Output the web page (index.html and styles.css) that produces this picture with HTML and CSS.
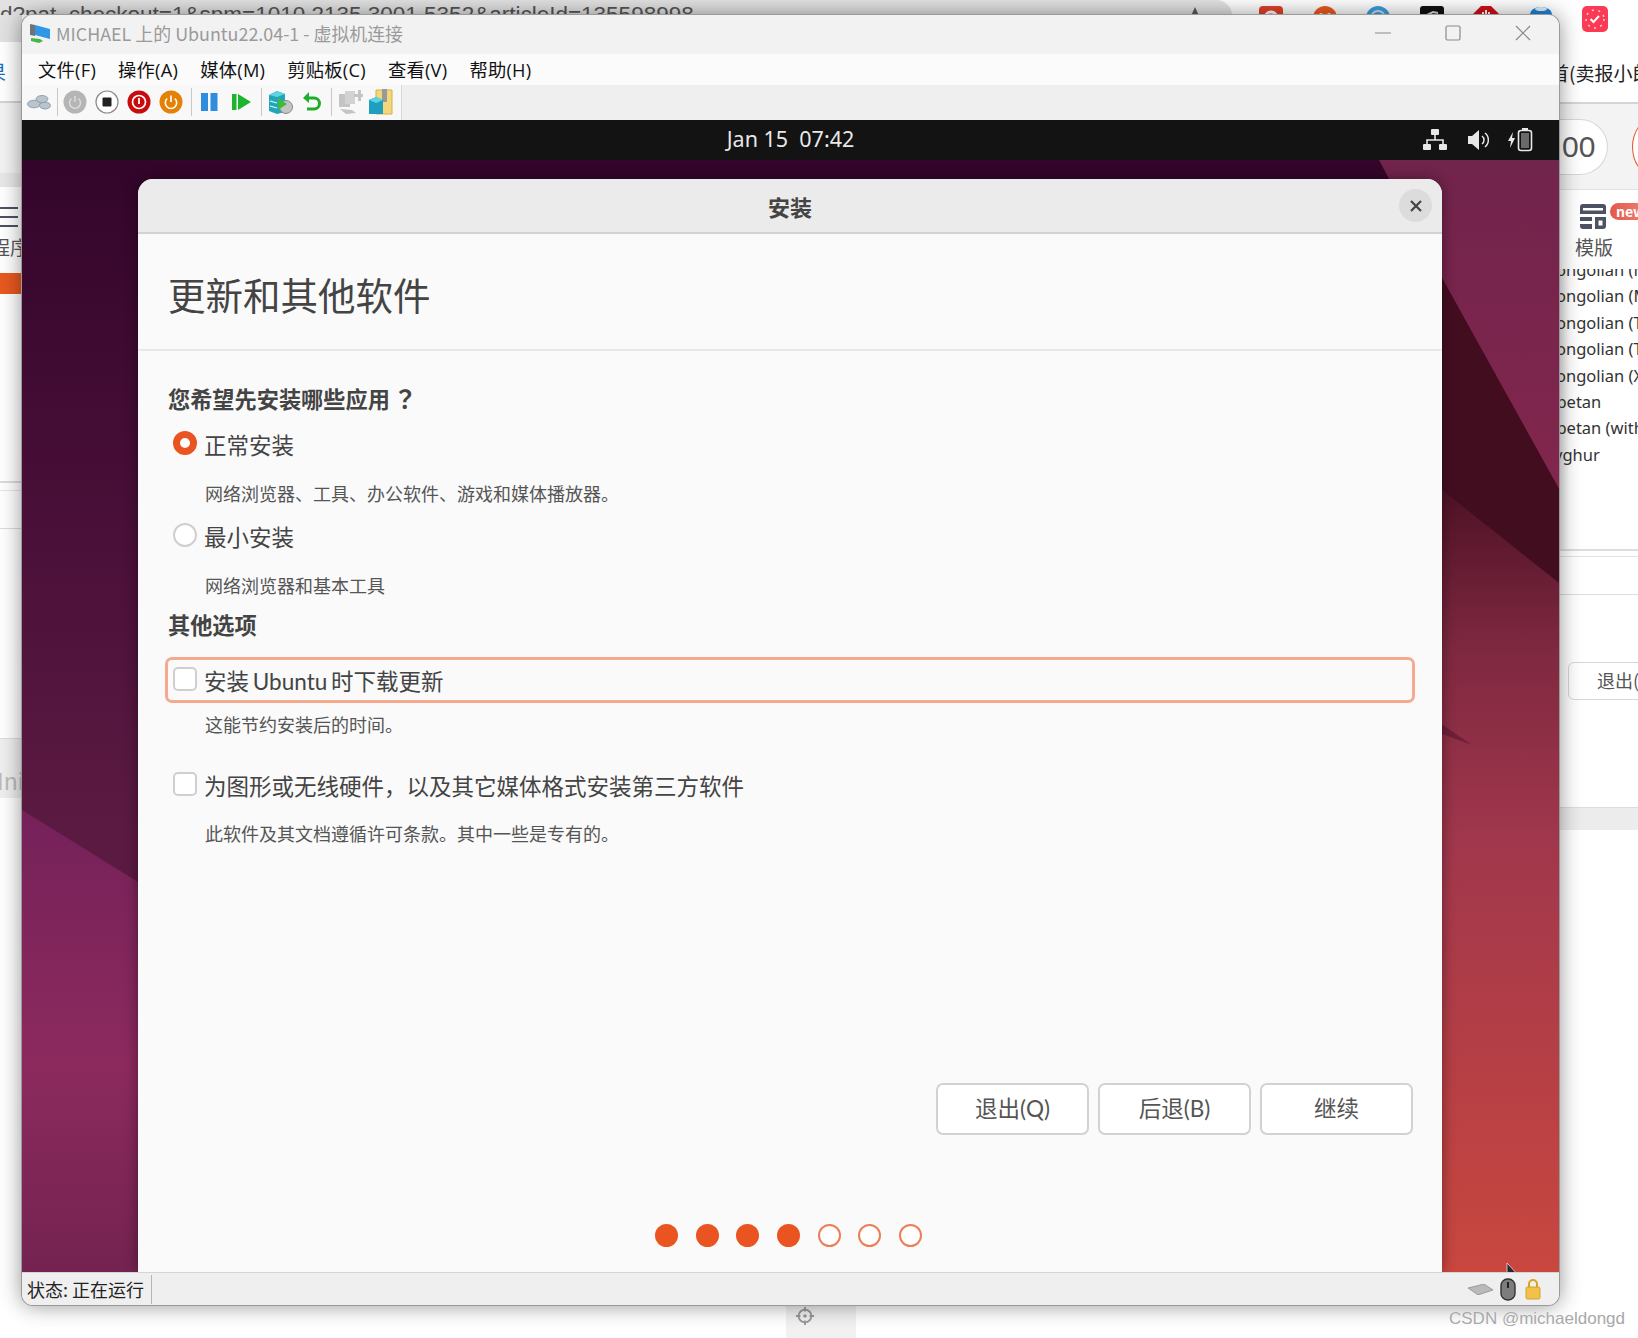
FILE: index.html
```html
<!DOCTYPE html>
<html lang="zh-CN">
<head>
    <meta charset="UTF-8">
    <title>MICHAEL 上的 Ubuntu22.04-1 - 虚拟机连接</title>
    <link rel="stylesheet" href="styles.css">
</head>
<body>
<div class="desktop">
    <!-- browser page behind the vm window -->
    <div class="browser-top">
        <div class="address-bar">
            <span class="address-text">d?pat_checkout=1&amp;spm=1010.2135.3001.5352&amp;articleId=135598998</span>
            <svg class="star" width="26" height="26" viewBox="0 0 26 26"><path d="M13 1l3.6 8 8.4.9-6.300 5.700 1.800 8.400L13 19.800 5.500 24l1.800-8.400L1 9.900 9.400 9z" fill="#5a5a5a"/></svg>
        </div>
        <div class="ext-icons">
            <svg width="24" height="24" viewBox="0 0 24 24"><rect width="24" height="24" rx="4" fill="#e2402c"/><circle cx="12" cy="12" r="6" fill="none" stroke="#fff" stroke-width="3"/></svg>
            <svg width="24" height="24" viewBox="0 0 24 24"><circle cx="12" cy="12" r="12" fill="#ee5a1f"/><circle cx="8" cy="9" r="2" fill="#fff"/><circle cx="16" cy="9" r="2" fill="#fff"/></svg>
            <svg width="24" height="24" viewBox="0 0 24 24"><circle cx="12" cy="12" r="12" fill="#3f9fdc"/><circle cx="12" cy="12" r="7" fill="none" stroke="#bfe2f7" stroke-width="2"/></svg>
            <svg width="24" height="24" viewBox="0 0 24 24"><rect width="24" height="24" rx="3" fill="#111"/><path d="M5 10l8-4 5 1" stroke="#ddd" stroke-width="2" fill="none"/></svg>
            <svg width="26" height="26" viewBox="0 0 26 26"><path d="M8 0h10l8 8v10l-8 8H8l-8-8V8z" fill="#d3101a"/><path d="M10 12V6M13 12V4M16 12V6" stroke="#fff" stroke-width="2"/></svg>
            <svg width="24" height="24" viewBox="0 0 24 24"><ellipse cx="12" cy="8" rx="11" ry="7" fill="#1b86dc"/><ellipse cx="12" cy="3" rx="6" ry="2" fill="#dff1fc"/></svg>
            <svg class="clock" width="26" height="26" viewBox="0 0 26 26"><rect width="26" height="26" rx="5" fill="#fb3a55"/><circle cx="13" cy="13" r="9" fill="none" stroke="#ffd0d6" stroke-width="1.500" stroke-dasharray="2 4.500"/><path d="M8.500 13l3 3 5.500-6" stroke="#fff" stroke-width="2" fill="none"/></svg>
        </div>
    </div>

    <div class="browser-main">
        <div class="page-left">
            <div class="left-head"><span class="left-link">果</span></div>
            <div class="left-tools">
                <div class="hamburger"></div>
                <div class="left-label">程序</div>
                <div class="left-active"></div>
            </div>
            <div class="left-rule"></div>
            <div class="left-rule left-rule-b"></div>
            <div class="left-band"><span>Ini</span></div>
        </div>

        <div class="page-gap"></div>

        <div class="page-right">
            <div class="right-head"><span>首(卖报小郎君)</span></div>
            <div class="right-band">
                <div class="pill">00</div>
                <div class="red-ring"></div>
            </div>
            <div class="template-cell">
                <svg width="26" height="25" viewBox="0 0 26 25"><path d="M3 0h20a3 3 0 0 1 3 3v7H0V3a3 3 0 0 1 3-3z" fill="#4d5263"/><rect x="3" y="4" width="20" height="2.500" fill="#fff"/><path d="M0 13h12v4H0zM0 20h12v5H3a3 3 0 0 1-3-3zM15 13h11v9a3 3 0 0 1-3 3h-8z" fill="#4d5263"/><rect x="18.500" y="16.500" width="4" height="5" fill="#fff"/></svg>
                <span class="new-badge">new</span>
                <div class="template-label">模版</div>
            </div>
            <ul class="lang-list">
                <li class="lang-m">Mongolian (Manchu)</li>
                <li class="lang-m">Mongolian (Manchu Galik)</li>
                <li class="lang-m">Mongolian (Todo)</li>
                <li class="lang-m">Mongolian (Todo Galik)</li>
                <li class="lang-m">Mongolian (Xibe)</li>
                <li class="lang-t">Tibetan</li>
                <li class="lang-t">Tibetan (with ASCII)</li>
                <li class="lang-u">Uyghur</li>
            </ul>
            <div class="right-rule"></div>
            <div class="right-field"></div>
            <div class="right-btn">退出(Q)</div>
            <div class="right-band-low"></div>
        </div>
    </div>

    <div class="browser-bottom">
        <div class="bottom-band">
            <svg width="20" height="20" viewBox="0 0 22 22"><circle cx="11" cy="11" r="7" fill="none" stroke="#999" stroke-width="2"/><circle cx="11" cy="11" r="2" fill="#999"/><path d="M11 1v5M11 16v5M1 11h5M16 11h5" stroke="#999" stroke-width="2"/></svg>
        </div>
    </div>

    <!-- hyper-v window -->
    <div class="vm-window">
        <div class="title-bar">
            <svg width="22" height="22" viewBox="0 0 22 22">
                <path d="M6 3l15 4v10L6 13z" fill="#2f97e6"/>
                <path d="M1 2l5 1v11l-5-1z" fill="#6d7478"/>
                <path d="M2 16l9 1 3 2-4 2-8-2z" fill="#49b34a"/>
            </svg>
            <span class="title-text">MICHAEL 上的 Ubuntu22.04-1 - 虚拟机连接</span>
            <div class="win-controls">
                <svg width="16" height="16" viewBox="0 0 16 16"><path d="M0 8h16" stroke="#8a8a8a" stroke-width="1.200"/></svg>
                <svg width="16" height="16" viewBox="0 0 16 16"><rect x="1" y="1" width="14" height="14" rx="1.500" fill="none" stroke="#8a8a8a" stroke-width="1.200"/></svg>
                <svg width="16" height="16" viewBox="0 0 16 16"><path d="M1 1l14 14M15 1L1 15" stroke="#8a8a8a" stroke-width="1.200"/></svg>
            </div>
        </div>

        <div class="menu-bar">
            <span class="menu-item">文件(F)</span>
            <span class="menu-item">操作(A)</span>
            <span class="menu-item">媒体(M)</span>
            <span class="menu-item">剪贴板(C)</span>
            <span class="menu-item">查看(V)</span>
            <span class="menu-item">帮助(H)</span>
        </div>

        <div class="tool-bar">
            <div class="tool-strip">
                <svg class="t-net" width="24" height="16" viewBox="0 0 24 16"><g fill="#b9c4cf" stroke="#8494a3" stroke-width=".8"><ellipse cx="7" cy="10" rx="6.500" ry="3.800"/><ellipse cx="18" cy="11.500" rx="5.500" ry="3.500"/><ellipse cx="15" cy="5" rx="6" ry="3.500"/></g></svg>
                <i class="tool-sep"></i>
                <svg class="t-btn" width="24" height="24" viewBox="0 0 24 24"><circle cx="12" cy="12" r="11.500" fill="#b5b5b5"/><path d="M8.500 8.500a5.500 5.500 0 1 0 7 0M12 6v6" fill="none" stroke="#dcdcdc" stroke-width="1.500"/></svg>
                <svg class="t-btn" width="24" height="24" viewBox="0 0 24 24"><circle cx="12" cy="12" r="11" fill="#fff" stroke="#8a8a8a" stroke-width="1.200"/><rect x="7.500" y="7.500" width="9" height="9" rx="1" fill="#222"/></svg>
                <svg class="t-btn" width="24" height="24" viewBox="0 0 24 24"><circle cx="12" cy="12" r="11.500" fill="#c90b0b"/><circle cx="12" cy="12" r="6.500" fill="none" stroke="#fff" stroke-width="1.700"/><path d="M12 8v6" stroke="#fff" stroke-width="1.800"/></svg>
                <svg class="t-btn" width="24" height="24" viewBox="0 0 24 24"><circle cx="12" cy="12" r="11.500" fill="#e38207"/><path d="M8.200 8.500a5.700 5.700 0 1 0 7.600 0M12 5.500V12" fill="none" stroke="#fff" stroke-width="1.600"/></svg>
                <i class="tool-sep"></i>
                <svg class="t-btn" width="24" height="24" viewBox="0 0 24 24"><rect x="4" y="3" width="7" height="18" fill="#2f8de0"/><rect x="13.500" y="3" width="7" height="18" fill="#2f8de0"/></svg>
                <svg class="t-btn" width="24" height="24" viewBox="0 0 24 24"><rect x="3" y="4" width="4.500" height="16" fill="#1cb52d"/><path d="M9 4l13 8-13 8z" fill="#1cb52d"/></svg>
                <i class="tool-sep"></i>
                <svg class="t-btn" width="26" height="26" viewBox="0 0 26 26"><path d="M2 6l8-4 8 3v18l-8 2-8-3z" fill="#23a5b8"/><path d="M2 6l8-4 8 3-8 3z" fill="#5fd3e2"/><path d="M3 12l7 2M3 17l7 2" stroke="#dff" stroke-width="1.200"/><circle cx="19" cy="18" r="6.500" fill="#c4c4c4" stroke="#888"/><path d="M11 9l9 6-9 6z" fill="#3dbb3d"/></svg>
                <svg class="t-btn" width="22" height="24" viewBox="0 0 22 24"><path d="M5 8h8a5.500 5.500 0 0 1 0 11H6" fill="none" stroke="#1fae2c" stroke-width="3"/><path d="M8 2L2 8l6 5z" fill="#1fae2c"/></svg>
                <i class="tool-sep"></i>
                <svg class="t-btn" width="26" height="26" viewBox="0 0 26 26"><g fill="#c4c4c4"><rect x="2" y="5" width="11" height="13"/><rect x="8" y="2" width="10" height="13" fill="#d2d2d2"/><path d="M17 5h4V1h3v4h2v3h-2v4h-3V8h-4z"/><path d="M3 20l12 1 4 3-10 1z"/></g></svg>
                <svg class="t-btn t-last" width="26" height="28" viewBox="0 0 26 28"><path d="M8 2h16v24H8z" fill="#f3d77a" stroke="#d5b04a"/><rect x="14" y="1" width="5" height="13" fill="#999"/><path d="M1 12l7-3 7 3v14H1z" fill="#1f9fbd"/><path d="M1 12l7-3 7 3-7 3z" fill="#58d4e6"/></svg>
            </div>
        </div>

        <div class="vm-screen">
            <div class="gnome-bar">
                <span class="clock-text">Jan 15&nbsp;&nbsp;07:42</span>
                <div class="tray">
                    <svg width="24" height="22" viewBox="0 0 24 22"><g fill="#e8e8e8"><rect x="8" y="0" width="8" height="6" rx="1"/><rect x="0" y="15" width="8" height="6" rx="1"/><rect x="16" y="15" width="8" height="6" rx="1"/></g><path d="M12 6v5M4 15v-4h16v4" fill="none" stroke="#e8e8e8" stroke-width="1.600"/></svg>
                    <svg width="24" height="22" viewBox="0 0 24 22"><path d="M1 7h4l7-6v20l-7-6H1z" fill="#e8e8e8"/><path d="M15 7a5 5 0 0 1 0 8M18 4a9 9 0 0 1 0 14" fill="none" stroke="#e8e8e8" stroke-width="1.500"/></svg>
                    <svg class="tray-power" width="26" height="24" viewBox="0 0 26 24"><path d="M6 4L1 13h3l-1 7 5-10H5z" fill="#e8e8e8"/><path d="M15 0h6v2h-6z" fill="#e8e8e8"/><rect x="11.500" y="2.500" width="13" height="20" rx="2.500" fill="none" stroke="#e8e8e8" stroke-width="1.600"/><rect x="14" y="5" width="8" height="15" fill="#6a6a6a"/></svg>
                </div>
            </div>

            <div class="wallpaper">
                <svg class="wall-art" viewBox="0 0 1537 1112" preserveAspectRatio="none">
                    <defs>
                        <linearGradient id="wall-base" x1="0" y1="0" x2="0" y2="1">
                            <stop offset="0" stop-color="#33052a"/>
                            <stop offset=".35" stop-color="#4b1039"/>
                            <stop offset=".6" stop-color="#5b1a42"/>
                        </linearGradient>
                        <linearGradient id="wall-left" x1="0" y1="650" x2="0" y2="1112" gradientUnits="userSpaceOnUse">
                            <stop offset="0" stop-color="#75215a"/>
                            <stop offset=".55" stop-color="#8c2a5e"/>
                            <stop offset="1" stop-color="#742350"/>
                        </linearGradient>
                        <linearGradient id="wall-red" x1="0" y1="331" x2="0" y2="1112" gradientUnits="userSpaceOnUse">
                            <stop offset="0" stop-color="#4f1226"/>
                            <stop offset=".2" stop-color="#7e2840"/>
                            <stop offset=".45" stop-color="#a1374c"/>
                            <stop offset="1" stop-color="#c9473f"/>
                        </linearGradient>
                        <linearGradient id="wall-plum" x1="0" y1="0" x2="0" y2="330" gradientUnits="userSpaceOnUse">
                            <stop offset="0" stop-color="#71244c"/>
                            <stop offset="1" stop-color="#82264d"/>
                        </linearGradient>
                    </defs>
                    <rect width="1537" height="1112" fill="url(#wall-base)"/>
                    <path d="M0 650L116 722V1112H0z" fill="url(#wall-left)"/>
                    <path d="M1357 0L1421 120 1537 329V0z" fill="url(#wall-plum)"/>
                    <path d="M1415 109L1537 329V423L1415 326z" fill="#430d20"/>
                    <path d="M1415 326L1537 423V1112H1415z" fill="url(#wall-red)"/>
                    <path d="M1415 561L1450 585 1415 572z" fill="#6e2039"/>
                </svg>

                <div class="dialog">
                    <div class="dialog-head">
                        <span class="dialog-title">安装</span>
                        <button class="dialog-close">
                            <svg width="14" height="14" viewBox="0 0 14 14"><path d="M2 2l10 10M12 2L2 12" stroke="#444" stroke-width="2.200"/></svg>
                        </button>
                    </div>
                    <div class="dialog-heading"><h1>更新和其他软件</h1></div>
                    <div class="dialog-body">
                        <div class="section-title first">您希望先安装哪些应用<span class="q-mark">？</span></div>
                        <div class="option first"><span class="radio checked"></span>正常安装</div>
                        <div class="desc">网络浏览器、工具、办公软件、游戏和媒体播放器。</div>
                        <div class="option"><span class="radio"></span>最小安装</div>
                        <div class="desc">网络浏览器和基本工具</div>
                        <div class="section-title">其他选项</div>
                        <div class="option focused"><span class="check"></span>安装 Ubuntu 时下载更新</div>
                        <div class="desc tight">这能节约安装后的时间。</div>
                        <div class="option spaced"><span class="check"></span>为图形或无线硬件，以及其它媒体格式安装第三方软件</div>
                        <div class="desc last">此软件及其文档遵循许可条款。其中一些是专有的。</div>
                        <div class="actions">
                            <button class="action-btn">退出(Q)</button>
                            <button class="action-btn">后退(B)</button>
                            <button class="action-btn">继续</button>
                        </div>
                        <div class="steps">
                            <i class="step done"></i><i class="step done"></i><i class="step done"></i><i class="step done"></i><i class="step"></i><i class="step"></i><i class="step"></i>
                        </div>
                    </div>
                </div>

                <svg class="pointer" width="14" height="9" viewBox="0 0 14 9"><path d="M1 0l12 13H7l-6 6z" fill="#2a2a2a" stroke="#ddd" stroke-width=".8"/></svg>
            </div>
        </div>

        <div class="status-bar">
            <span class="status-text">状态: 正在运行</span>
            <div class="status-icons">
                <svg class="kbd" width="25" height="11" viewBox="0 0 25 11"><path d="M0 4L16 0l9 6-15 5z" fill="#b9b9b9" stroke="#7b7b7b" stroke-width=".6"/></svg>
                <svg width="16" height="23" viewBox="0 0 16 23"><rect x="1" y="1" width="14" height="21" rx="6.500" fill="#7d7d7d" stroke="#333" stroke-width="1.400"/><rect x="7" y="4" width="2" height="6" fill="#222"/></svg>
                <svg width="16" height="22" viewBox="0 0 16 22"><path d="M4 10V6a4 4 0 0 1 8 0v4" fill="none" stroke="#d9a520" stroke-width="2"/><rect x="1" y="9" width="14" height="12" rx="1.500" fill="#f2c14a" stroke="#c9971a" stroke-width=".8"/></svg>
            </div>
        </div>
    </div>

    <div class="watermark">CSDN @michaeldongd</div>
</div>
</body>
</html>
```

FILE: styles.css
```css
* {
    box-sizing: border-box;
}
html, body {
    margin: 0;
    padding: 0;
}
body {
    font-family: "Noto Sans CJK SC", "Noto Sans", sans-serif;
    color: #222;
    background: #fff;
}
.desktop {
    position: relative;
    width: 1638px;
    height: 1338px;
    overflow: hidden;
    background: #fff;
}

/* browser behind */
.browser-top {
    display: flex;
    height: 42px;
    background: linear-gradient(to right, #e2e2e2 22px, #fff 22px);
}
.address-bar {
    width: 1232px;
    height: 15px;
    overflow: hidden;
    background: #e2e2e2;
    border-radius: 0 16px 0 0 / 0 15px 0 0;
    display: flex;
    justify-content: space-between;
    padding: 0 24px 0 0;
}
.address-text {
    font-family: "Liberation Sans", sans-serif;
    font-size: 22.500px;
    line-height: 30px;
    color: #555;
    white-space: nowrap;
}
.star {
    margin-top: 6px;
    flex: none;
}
.ext-icons {
    flex: 1;
    display: flex;
    gap: 29.500px;
    padding: 6px 0 0 27px;
    align-items: flex-start;
}
.ext-icons svg {
    flex: none;
}
.browser-main {
    display: flex;
    height: 1264px;
}
.page-left {
    width: 22px;
    overflow: hidden;
    background: #fff;
}
.left-head {
    height: 61px;
    border-bottom: 2px solid #d4d4d4;
}
.left-link {
    display: block;
    font-size: 20px;
    line-height: 60px;
    color: #1a6fc4;
    margin-left: -14px;
}
.left-tools {
    height: 190px;
    padding-top: 54px;
    background: linear-gradient(#f3f3f3 70px, #e8e8e8 70px, #e8e8e8 84px, #fff 84px);
}
.hamburger {
    width: 18px;
    height: 20px;
    margin-top: 50px;
    border-top: 2px solid #4d5263;
    border-bottom: 2px solid #4d5263;
}
.hamburger::after {
    content: "";
    display: block;
    height: 2px;
    margin-top: 7px;
    background: #4d5263;
}
.left-label {
    font-size: 19px;
    line-height: 26px;
    margin: 7px 0 0 -9px;
    color: #555;
    white-space: nowrap;
}
.left-active {
    height: 21px;
    margin-top: 13px;
    background: #e8591f;
}
.left-rule {
    margin-top: 188px;
    height: 10px;
    border-top: 2px solid #dcdcdc;
    border-bottom: 1px solid #e6e6e6;
}
.left-rule-b {
    margin-top: 37px;
    height: 1px;
    border-bottom: 0;
    border-top: 1px solid #dcdcdc;
}
.left-band {
    margin-top: 209px;
    height: 60px;
    background: #efefef;
    border-top: 1px solid #ddd;
    padding-top: 26px;
}
.left-band span {
    display: block;
    font-size: 23px;
    line-height: 30px;
    color: #bbb;
    margin-left: -3px;
}
.page-gap {
    width: 1537px;
}
.page-right {
    width: 79px;
    overflow: hidden;
    background: #fff;
}
.right-head {
    height: 62px;
    border-bottom: 2px solid #d4d4d4;
    white-space: nowrap;
}
.right-head span {
    display: block;
    font-size: 19px;
    line-height: 62px;
    margin-left: -9px;
}
.right-band {
    height: 86px;
    background: #f3f3f3;
    border-bottom: 1px solid #e2e2e2;
    display: flex;
    align-items: center;
}
.pill {
    width: 49px;
    height: 56px;
    flex: none;
    background: #fff;
    border: 1px solid #d6d6d6;
    border-left: 0;
    border-radius: 0 28px 28px 0;
    font-size: 30px;
    font-family: "Liberation Sans", sans-serif;
    color: #555;
    line-height: 54px;
    padding-left: 3px;
}
.red-ring {
    width: 40px;
    height: 56px;
    flex: none;
    margin-left: 24px;
    border: 1.500px solid #e95420;
    border-radius: 50%;
    background: #fff;
}
.template-cell {
    position: relative;
    height: 79px;
    padding: 14px 0 0 21px;
}
.new-badge {
    position: absolute;
    left: 51px;
    top: 13px;
    width: 44px;
    height: 17px;
    border-radius: 9px 0 0 9px;
    background: linear-gradient(to right, #e4574c, #ef8a78);
    color: #fff;
    font-size: 14px;
    font-weight: 700;
    line-height: 16px;
    padding-left: 6px;
}
.template-cell svg {
    display: block;
}
.template-label {
    font-size: 19px;
    line-height: 26px;
    color: #555;
    margin: 5px 0 0 -5px;
}
.lang-list {
    list-style: none;
    margin: 0;
    padding: 0;
    height: 280px;
    overflow: hidden;
    background: linear-gradient(to right, #e8e8e8, #fff 10px);
    white-space: nowrap;
    font-family: "Noto Sans", sans-serif;
    font-size: 16.500px;
    color: #333;
}
.lang-list li {
    height: 26.400px;
    line-height: 26.400px;
}
.lang-list li:first-child {
    margin-top: -12px;
}
.lang-m {
    margin-left: -18px;
}
.lang-t {
    margin-left: -16px;
}
.lang-u {
    margin-left: -17px;
}
.right-rule {
    height: 8px;
    border-top: 2px solid #ddd;
    border-bottom: 1px solid #e2e2e2;
}
.right-field {
    height: 38px;
    border-bottom: 1px solid #ddd;
}
.right-btn {
    width: 90px;
    height: 38px;
    margin: 67px 0 0 9px;
    border: 1.500px solid #d8d8d8;
    border-radius: 6px;
    font-size: 18px;
    line-height: 34px;
    color: #555;
    padding-left: 28px;
    white-space: nowrap;
}
.right-band-low {
    height: 23px;
    margin-top: 107px;
    background: #ececec;
    border-top: 1px solid #ddd;
}
.browser-bottom {
    height: 32px;
    background: #fff;
    padding-left: 786px;
}
.bottom-band {
    width: 70px;
    height: 32px;
    background: #f1f1f1;
    padding: 0 0 0 9px;
    display: flex;
    align-items: flex-start;
}

/* hyper-v window */
.vm-window {
    position: absolute;
    left: 22px;
    top: 15px;
    width: 1537px;
    height: 1290px;
    display: flex;
    flex-direction: column;
    background: #f2f2f2;
    border-radius: 11px;
    overflow: hidden;
    box-shadow: 0 0 0 1px #9a9a9a, 0 0 22px rgba(0,0,0,0.45);
}
.title-bar {
    height: 39px;
    flex: none;
    display: flex;
    align-items: center;
    padding: 0 0 3px 7px;
    background: #f2f2f2;
}
.title-text {
    margin-left: 5px;
    font-size: 17.900px;
    color: #9a9a9a;
    white-space: nowrap;
}
.win-controls {
    margin-left: auto;
    display: flex;
    gap: 54px;
    padding-right: 28px;
}
.menu-bar {
    height: 31px;
    flex: none;
    display: flex;
    align-items: center;
    background: #fbfbfb;
    padding: 0 0 2px 16px;
    font-family: "Open Sans", "Noto Sans CJK SC", sans-serif;
    font-size: 18.300px;
    letter-spacing: .25px;
    color: #111;
}
.menu-item {
    margin-right: 22px;
    white-space: nowrap;
}
.tool-bar {
    height: 35px;
    flex: none;
    background: #efefef;
}
.tool-strip {
    width: 380px;
    height: 35px;
    background: #f8f8f8;
    border-right: 1px solid #d8d8d8;
    display: flex;
    align-items: center;
    padding: 0 0 2px 5px;
}
.t-net {
    margin-right: 2px;
    flex: none;
}
.tool-sep {
    flex: none;
    width: 1px;
    height: 28px;
    background: #c8c8c8;
    margin: 0 1px 0 4px;
}
.t-btn {
    margin: 0 4px;
    flex: none;
}
.t-btn.t-last {
    margin-left: 1px;
}
.vm-screen {
    flex: 1;
    display: flex;
    flex-direction: column;
    min-height: 0;
    background: #131313;
}
.gnome-bar {
    position: relative;
    height: 40px;
    flex: none;
    background: #131313;
    display: flex;
    align-items: center;
    justify-content: center;
    padding-bottom: 4px;
}
.clock-text {
    font-family: "Noto Sans", sans-serif;
    font-size: 21.500px;
    color: #e8e8e8;
}
.tray {
    position: absolute;
    right: 26px;
    top: 8px;
    display: flex;
    gap: 20px;
    align-items: center;
}
.tray-power {
    margin-left: -4px;
}
.wallpaper {
    position: relative;
    flex: 1;
    min-height: 0;
    padding: 19px 117px 0 116px;
    display: flex;
    overflow: hidden;
}
.wall-art {
    position: absolute;
    left: 0;
    top: 0;
    width: 100%;
    height: 100%;
}
.pointer {
    position: absolute;
    left: 1484px;
    bottom: 0;
}
.dialog {
    position: relative;
    flex: 1;
    display: flex;
    flex-direction: column;
    background: #fafafa;
    border-radius: 15px 15px 0 0;
    box-shadow: 0 0 14px rgba(0,0,0,0.4);
    font-family: "Lato", "Noto Sans CJK SC", sans-serif;
}
.dialog-head {
    position: relative;
    height: 55px;
    flex: none;
    background: #ebebeb;
    border-radius: 15px 15px 0 0;
    border-bottom: 2px solid #d3d3d3;
    display: flex;
    align-items: center;
    justify-content: center;
}
.dialog-title {
    font-size: 22px;
    font-weight: 700;
    color: #444;
}
.dialog-close {
    position: absolute;
    right: 10px;
    top: 10px;
    width: 33px;
    height: 33px;
    border: none;
    border-radius: 50%;
    background: #dcdcdc;
    padding: 0;
    display: flex;
    align-items: center;
    justify-content: center;
}
.dialog-heading {
    height: 117px;
    flex: none;
    border-bottom: 2px solid #e8e8e8;
    padding: 27px 0 0 30px;
}
.dialog-heading h1 {
    margin: 0;
    font-size: 37.500px;
    font-weight: 400;
    line-height: 70px;
    color: #444;
}
.dialog-body {
    flex: 1;
    display: flex;
    flex-direction: column;
    padding: 35px 27px 0 30px;
    color: #444;
}
.section-title {
    height: 28px;
    line-height: 28px;
    margin-top: 12px;
    font-size: 22.200px;
    font-weight: 700;
}
.section-title.first {
    margin-top: 0;
}
.q-mark {
    display: inline-block;
    margin-left: 3px;
    font-family: "Noto Sans CJK TC", sans-serif;
    font-size: 24px;
    line-height: 20px;
}
.option {
    height: 32px;
    margin-top: 12px;
    display: flex;
    align-items: center;
    font-size: 22.500px;
    padding-left: 5px;
    white-space: nowrap;
}
.option.first {
    margin-top: 14px;
}
.option.spaced {
    margin-top: 30px;
}
.option.focused {
    height: 46px;
    margin: 17px 0 0 -3px;
    padding-left: 5px;
    border: 3px solid #f5a98f;
    border-radius: 7px;
    word-spacing: -2px;
}
.desc {
    height: 28px;
    line-height: 28px;
    margin-top: 20px;
    padding-left: 37px;
    font-size: 18px;
    color: #555;
}
.desc.tight {
    margin-top: 8px;
}
.desc.last {
    margin-top: 19px;
}
.radio, .check {
    flex: none;
    width: 24px;
    height: 24px;
    margin: -2px 7px 0 0;
    background: #fff;
    border: 2px solid #cfcfcf;
}
.radio {
    border-radius: 50%;
}
.radio.checked {
    border: 7px solid #e95420;
}
.check {
    border-radius: 5px;
}
.actions {
    margin-top: auto;
    display: flex;
    justify-content: flex-end;
    gap: 9px;
    padding-right: 2px;
}
.action-btn {
    width: 153px;
    height: 52px;
    background: #fff;
    border: 2px solid #d2d2d2;
    border-radius: 7px;
    font-family: inherit;
    font-size: 22.500px;
    color: #555;
    padding: 0 0 4px;
}
.steps {
    display: flex;
    justify-content: center;
    gap: 17.600px;
    margin: 89px 0 25px -6px;
}
.step {
    width: 23px;
    height: 23px;
    border-radius: 50%;
    background: #fff;
    border: 2px solid #ee7d55;
}
.step.done {
    background: #e95420;
    border-color: #e95420;
}
.status-bar {
    height: 33px;
    flex: none;
    display: flex;
    align-items: center;
    background: #efefef;
    border-top: 1px solid #d4d4d4;
    padding-left: 5px;
}
.status-text {
    font-size: 18px;
    color: #222;
    padding-right: 7px;
    border-right: 1px solid #b5b5b5;
    line-height: 29px;
}
.status-icons {
    margin-left: auto;
    display: flex;
    align-items: center;
    gap: 9px;
    padding-right: 18px;
}
.kbd {
    margin-right: -2px;
}
.watermark {
    position: absolute;
    left: 1449px;
    top: 1307px;
    font-family: "Liberation Sans", sans-serif;
    font-size: 17px;
    line-height: 24px;
    color: #a8a8a8;
    text-shadow: 0 0 1px #fff;
    white-space: nowrap;
}
```
